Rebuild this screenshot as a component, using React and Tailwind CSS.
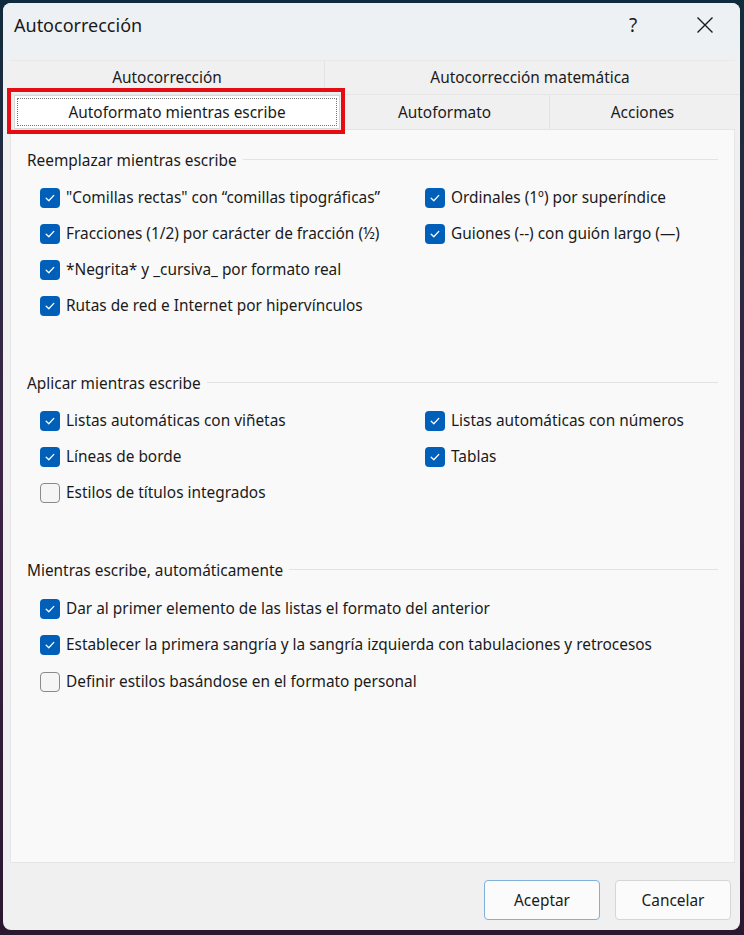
import React from "react";

const font = "font-['Noto_Sans',_'Liberation_Sans',_sans-serif]";

function Check({ checked }) {
  if (!checked) {
    return (
      <span className="w-[20px] h-[20px] shrink-0 rounded-[4px] border border-[#8a8a8a] bg-[#f5f5f5]" />
    );
  }
  return (
    <span className="w-[20px] h-[20px] shrink-0 rounded-[4px] bg-[#005fb8] flex items-center justify-center">
      <svg width="12" height="12" viewBox="0 0 12 12" fill="none">
        <path d="M2.2 6.3 L4.8 8.8 L9.8 3.4" stroke="white" strokeWidth="1.3" strokeLinecap="round" strokeLinejoin="round" />
      </svg>
    </span>
  );
}

function Option({ label, checked = true }) {
  return (
    <div className="h-[36px] flex items-center gap-[6px]">
      <Check checked={checked} />
      <span className="whitespace-nowrap">{label}</span>
    </div>
  );
}

function Group({ title, children }) {
  return (
    <div>
      <div className="h-[20px] flex items-center pl-[16px] pr-[16px]">
        <span className="whitespace-nowrap pr-[6px]">{title}</span>
        <div className="flex-1 h-px bg-[#e3e3e3] mt-[-3px]" />
      </div>
      <div className="grid grid-cols-[385px_1fr] pl-[29px] mt-[9px]">{children}</div>
    </div>
  );
}

export default function App() {
  return (
    <div className="w-[744px] h-[935px] bg-gradient-to-b from-[#0f2c3c] via-[#3b2444] to-[#2a1830] p-[3px] pr-[4px] pb-[5px]">
      <div className={`h-full rounded-[8px] bg-[#f0f0f0] flex flex-col text-[#1a1a1a] ${font}`}>
        {/* Title bar */}
        <div className="h-[57px] bg-[#eef1f4] rounded-t-[8px] flex items-start justify-between pl-[11px] pt-[10px]">
          <span className="text-[18px] leading-[24px]">Autocorrección</span>
          <div className="flex items-center pr-[26px]">
            <span className="text-[19px] leading-[24px] w-[22px] text-center">?</span>
            <span className="ml-[52px] flex justify-center">
              <svg width="18" height="18" viewBox="0 0 18 18" fill="none">
                <path d="M1.5 1.5 L16.5 16.5 M16.5 1.5 L1.5 16.5" stroke="#1a1a1a" strokeWidth="1.4" />
              </svg>
            </span>
          </div>
        </div>

        {/* Tabs */}
        <div className="pl-[7px] text-[15.4px]">
          <div className="flex h-[35px] border-b border-[#e6e6e6]">
            <div className="w-[315px] flex items-center justify-center pt-px border-r border-[#e3e3e3] border-t border-t-[#e8e8e8]">Autocorrección</div>
            <div className="w-[410px] flex items-center justify-center pt-px border-t border-[#e8e8e8]">Autocorrección matemática</div>
          </div>
          <div className="flex h-[34px]">
            <div className="w-[330px] relative">
              <div className="absolute left-[-3px] right-[-5px] top-[-7px] bottom-[-5px] border-[4px] border-[#e30d13]" />
              <div className="h-full ml-[4px] bg-white border border-[#d9d9d9] flex items-center justify-center p-[2px]">
                <div className="w-full h-full border border-dotted border-[#777] flex items-center justify-center pt-px">
                  Autoformato mientras escribe
                </div>
              </div>
            </div>
            <div className="w-[210px] flex items-center justify-center pt-[2px] border-r border-[#e3e3e3]">Autoformato</div>
            <div className="w-[185px] flex items-center justify-center pt-[2px]">Acciones</div>
          </div>
        </div>

        {/* Panel */}
        <div className="ml-[7px] mr-[5px] h-[734px] bg-[#f9f9f9] border border-[#e5e5e5] pt-[21px] text-[15.4px] flex flex-col gap-[50px]">
          <Group title="Reemplazar mientras escribe">
            <Option label={'"Comillas rectas" con “comillas tipográficas”'} />
            <Option label="Ordinales (1º) por superíndice" />
            <Option label="Fracciones (1/2) por carácter de fracción (½)" />
            <Option label="Guiones (--) con guión largo (—)" />
            <Option label="*Negrita* y _cursiva_ por formato real" />
            <div />
            <Option label="Rutas de red e Internet por hipervínculos" />
          </Group>
          <Group title="Aplicar mientras escribe">
            <Option label="Listas automáticas con viñetas" />
            <Option label="Listas automáticas con números" />
            <Option label="Líneas de borde" />
            <Option label="Tablas" />
            <Option label="Estilos de títulos integrados" checked={false} />
          </Group>
          <Group title="Mientras escribe, automáticamente">
            <div className="col-span-2 pt-px">
              <Option label="Dar al primer elemento de las listas el formato del anterior" />
              <Option label="Establecer la primera sangría y la sangría izquierda con tabulaciones y retrocesos" />
              <div className="mt-px">
                <Option label="Definir estilos basándose en el formato personal" checked={false} />
              </div>
            </div>
          </Group>
        </div>

        {/* Buttons */}
        <div className="flex-1 flex items-start justify-end gap-[15px] pt-[17px] pr-[9px] text-[15.4px]">
          <button className="w-[116px] h-[40px] rounded-[4px] bg-[#fbfbfb] border border-[#7fb1dc] pt-[2px]">Aceptar</button>
          <button className="w-[116px] h-[40px] rounded-[4px] bg-[#fbfbfb] border border-[#d6d6d6] pt-[2px]">Cancelar</button>
        </div>
      </div>
    </div>
  );
}
